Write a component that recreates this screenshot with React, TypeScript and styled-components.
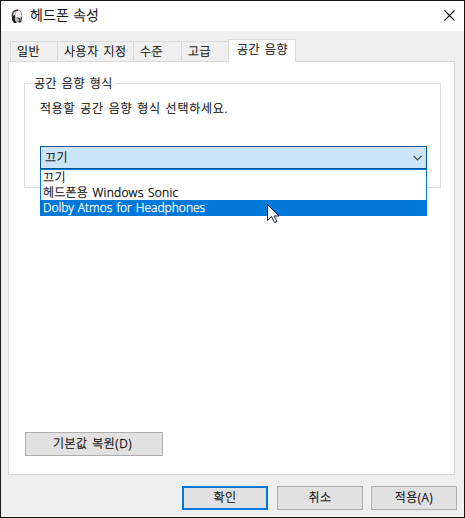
import React from "react";
import styled, { createGlobalStyle } from "styled-components";

const GlobalStyle = createGlobalStyle`
  *, *::before, *::after { box-sizing: border-box; }
  body { margin: 0; overflow: hidden; }
  button { font: inherit; color: inherit; }
`;

const Dialog = styled.main`
  position: relative;
  display: flex;
  flex-direction: column;
  width: 465px;
  height: 518px;
  border: 1px solid #171717;
  background: #efefef;
  color: #000;
  font-family: "Noto Sans", "Noto Sans CJK KR", sans-serif;
  font-size: 12px;
  font-weight: 300;
  line-height: 15px;
`;

const TitleBar = styled.header`
  display: flex;
  align-items: center;
  height: 30px;
  flex: none;
  padding: 0 9px 0 10px;
  background: #fff;
`;

const Title = styled.h1`
  flex: 1;
  margin: 0 0 2px 6px;
  font-size: 14px;
  font-weight: 300;
  line-height: 20px;
`;

const CloseButton = styled.button`
  display: flex;
  padding: 0;
  border: 0;
  margin-bottom: 1px;
  background: none;
`;

const Label = styled.span<{ $word?: number; $letter?: number }>`
  white-space: nowrap;
  word-spacing: ${(p) => p.$word ?? 1}px;
  letter-spacing: ${(p) => p.$letter ?? 0.55}px;
  -webkit-text-stroke: 0.25px currentColor;
`;

const TabList = styled.nav`
  display: flex;
  align-items: flex-end;
  height: 30px;
  flex: none;
  padding-left: 9px;
`;

const Tab = styled.button<{ $width: number; $active?: boolean }>`
  position: relative;
  z-index: ${(p) => (p.$active ? 1 : 0)};
  width: ${(p) => p.$width}px;
  height: ${(p) => (p.$active ? 23 : 20)}px;
  margin-bottom: ${(p) => (p.$active ? -1 : 0)}px;
  padding: ${(p) => (p.$active ? "0 0 3px 8px" : "0 0 0 6px")};
  border: 1px solid #d9d9d9;
  border-width: ${(p) => (p.$active ? "1px 1px 0" : "1px 0 0 1px")};
  background: ${(p) => (p.$active ? "#fff" : "#efefef")};
  text-align: left;
`;

const Panel = styled.section`
  display: flex;
  flex-direction: column;
  justify-content: space-between;
  width: 447px;
  height: 414px;
  flex: none;
  margin-left: 7px;
  padding: 14px 13px 18px 15px;
  border: 1px solid #d9d9d9;
  background: #fff;
`;

const Group = styled.fieldset`
  width: 417px;
  height: 112px;
  margin: 0;
  padding: 10px 13px 0 15px;
  border: 1px solid #dcdcdc;
`;

const Legend = styled.legend`
  height: 15px;
  margin-left: -9px;
  padding: 0 2px 0 3px;
`;

const Instruction = styled.p`
  margin: 0 0 30px;
`;

const SelectWrap = styled.div`
  position: relative;
`;

const Select = styled.button`
  display: flex;
  align-items: center;
  justify-content: space-between;
  width: 387px;
  height: 23px;
  padding: 0 4px;
  border: 1px solid #005499;
  background: #cce4f7;
`;

const Options = styled.ul`
  position: absolute;
  top: 23px;
  left: 0;
  width: 387px;
  margin: 0;
  padding: 0;
  border: 1px solid #0078d7;
  background: #fff;
  list-style: none;
`;

const Option = styled.li<{ $selected?: boolean }>`
  height: 15px;
  padding-left: 2px;
  background: ${(p) => (p.$selected ? "#0078d7" : "#fff")};
  color: ${(p) => (p.$selected ? "#fff" : "#000")};
`;

const Footer = styled.footer`
  display: flex;
  justify-content: flex-end;
  gap: 8px;
  padding: 11px 7px 0 0;
`;

const PushButton = styled.button<{ $width?: number; $primary?: boolean }>`
  width: ${(p) => p.$width ?? 86}px;
  height: 24px;
  margin-right: ${(p) => (p.$primary ? 1 : 0)}px;
  padding: 0 0 1px;
  border: ${(p) => (p.$primary ? "2px solid #0078d7" : "1px solid #adadad")};
  background: #e1e1e1;
`;

const RestoreButton = styled(PushButton)`
  margin-left: 1px;
  padding-right: 3px;
`;

const Pointer = styled.svg`
  position: absolute;
  left: 266px;
  top: 203px;
`;

const Headphones = () => (
  <svg width="13" height="15" viewBox="0 0 13 15">
    <path d="M4 8C4 3 5 1 7 1c3 0 4 4 3.500 8" fill="#f1f1f1" stroke="#999" />
    <path d="M1.500 8C1 3.500 3 1 7 1" fill="none" stroke="#444" strokeWidth="1.6" />
    <path d="M1 7l3-1v5l2 2-1 1H3l-2-3Z" fill="#202020" />
    <path d="M4 8h2l2 3-1 2H5Z" fill="#b5b5b5" />
    <path d="M6 8l3 1 2-1v4l-2 2-2-1 1-2Z" fill="#454545" />
    <path d="M9 9l1 1v2" fill="none" stroke="#999" />
  </svg>
);

const tabs = [
  { text: "일반", width: 47 },
  { text: "사용자 지정", width: 76 },
  { text: "수준", width: 48 },
  { text: "고급", width: 47 },
  { text: "공간 음향", width: 68, active: true },
];

export default function App() {
  return (
    <>
      <GlobalStyle />
      <Dialog>
        <TitleBar>
          <Headphones />
          <Title><Label $word={0} $letter={0.15}>헤드폰 속성</Label></Title>
          <CloseButton aria-label="닫기">
            <svg width="11" height="11" viewBox="0 0 11 11">
              <path d="M.5.5l10 10M10.5.5l-10 10" stroke="#111" strokeWidth="1.1" />
            </svg>
          </CloseButton>
        </TitleBar>
        <TabList>
          {tabs.map((t) => (
            <Tab key={t.text} $width={t.width} $active={t.active}>
              <Label>{t.text}</Label>
            </Tab>
          ))}
        </TabList>
        <Panel>
          <Group>
            <Legend><Label>공간 음향 형식</Label></Legend>
            <Instruction><Label $letter={0.75}>적용할 공간 음향 형식 선택하세요.</Label></Instruction>
            <SelectWrap>
              <Select>
                <Label>끄기</Label>
                <svg width="9" height="6" viewBox="0 0 9 6">
                  <path d="M.5.8l4 4 4-4" fill="none" stroke="#444" strokeWidth="1.2" />
                </svg>
              </Select>
              <Options>
                <Option><Label>끄기</Label></Option>
                <Option><Label $letter={0.25}>헤드폰용 Windows Sonic</Label></Option>
                <Option $selected><Label $letter={-0.05}>Dolby Atmos for Headphones</Label></Option>
              </Options>
            </SelectWrap>
          </Group>
          <RestoreButton $width={138}><Label $letter={0.5}>기본값 복원(D)</Label></RestoreButton>
        </Panel>
        <Footer>
          <PushButton $primary><Label>확인</Label></PushButton>
          <PushButton><Label>취소</Label></PushButton>
          <PushButton><Label $letter={0.45}>적용(A)</Label></PushButton>
        </Footer>
        <Pointer width="13" height="20" viewBox="0 0 13 20">
          <path d="M.5.5v16l4-4 3 6 2.5-1-3-5.500h5Z" fill="#fff" stroke="#111936" />
        </Pointer>
      </Dialog>
    </>
  );
}
